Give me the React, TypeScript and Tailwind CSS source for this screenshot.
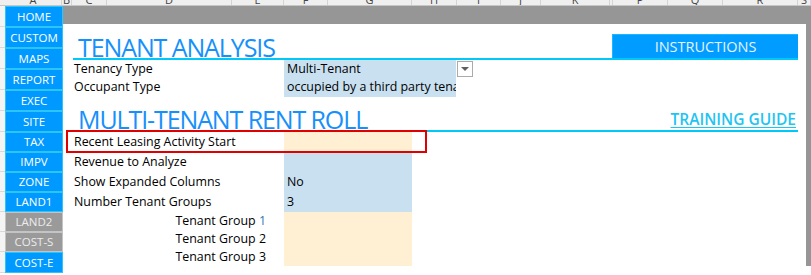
import React from 'react';

const font = { fontFamily: '"Open Sans", "Noto Sans", "DejaVu Sans", sans-serif' };

// spreadsheet column headers (only the bottom of the letters is visible)
const columns: { letter: string; w: number }[] = [
  { letter: 'A', w: 57 },
  { letter: 'B', w: 10 },
  { letter: 'C', w: 35 },
  { letter: 'D', w: 125 },
  { letter: 'E', w: 52 },
  { letter: 'F', w: 44 },
  { letter: 'G', w: 84 },
  { letter: 'H', w: 45 },
  { letter: 'I', w: 44 },
  { letter: 'J', w: 40 },
  { letter: 'K', w: 69 },
  { letter: '', w: 3 },
  { letter: 'P', w: 55 },
  { letter: 'Q', w: 55 },
  { letter: 'R', w: 75 },
  { letter: 'S', w: 13 },
];

const navItems: { label: string; gray?: boolean; h: string }[] = [
  { label: 'HOME', h: 'h-[21px]' },
  { label: 'CUSTOM', h: 'h-[21px]' },
  { label: 'MAPS', h: 'h-[21px]' },
  { label: 'REPORT', h: 'h-[21px]' },
  { label: 'EXEC', h: 'h-[21px]' },
  { label: 'SITE', h: 'h-[21px]' },
  { label: 'TAX', h: 'h-[20px]' },
  { label: 'IMPV', h: 'h-[20px]' },
  { label: 'ZONE', h: 'h-[20px]' },
  { label: 'LAND1', h: 'h-[20px]' },
  { label: 'LAND2', gray: true, h: 'h-[20px]' },
  { label: 'COST-S', gray: true, h: 'h-[20px]' },
  { label: 'COST-E', h: 'h-[21px]' },
];

const ColumnHeader = () => (
  <div className="flex h-[6px] overflow-hidden bg-[#efefef] border-b border-[#c6c6c6]">
    <div className="w-[5px] shrink-0" />
    {columns.map((c, i) => (
      <div
        key={i}
        className="shrink-0 border-r border-[#d4d4d4] flex justify-center overflow-hidden"
        style={{ width: c.w }}
      >
        <span className="text-[11px] leading-none text-[#444] -mt-[6px]">{c.letter}</span>
      </div>
    ))}
  </div>
);

const NavColumn = () => (
  <div className="flex shrink-0">
    <div className="w-[5px] bg-[#f4f4f4] flex flex-col">
      {navItems.map((n) => (
        <div key={n.label} className={`${n.h} border-b border-[#d9d9d9]`} />
      ))}
    </div>
    <div className="w-[58px] flex flex-col">
      {navItems.map((n) => (
        <div
          key={n.label}
          className={`${n.h} flex items-center justify-center text-[11.5px] border ${
            n.gray
              ? 'bg-[#9a9a9a] border-[#c4c4c4] text-[#ececec]'
              : 'bg-[#0099ff] border-[#2bc6f7] text-white'
          }`}
        >
          {n.label}
        </div>
      ))}
    </div>
  </div>
);

const Row = ({
  label,
  value,
  cell,
  h = 'h-[20px]',
  right,
  children,
}: {
  label: React.ReactNode;
  value?: string;
  cell?: string;
  h?: string;
  right?: boolean;
  children?: React.ReactNode;
}) => (
  <div className={`flex items-stretch ${h}`}>
    <div
      className={`w-[211px] shrink-0 flex items-center text-[12.4px] text-black whitespace-nowrap ${
        right ? 'justify-end pr-[18px]' : 'pl-[1px]'
      }`}
    >
      {label}
    </div>
    <div className={`${cell ?? ''} flex items-center pl-[3px] text-[12.4px] text-black whitespace-nowrap overflow-hidden`}>
      {value}
    </div>
    {children}
  </div>
);

const Title = ({ children }: { children: React.ReactNode }) => (
  <div className="pl-[5px] text-[25px] leading-[22px] text-[#1690fb] font-[370] tracking-[-1.1px]">
    {children}
  </div>
);

export default function App() {
  return (
    <div className="w-[811px] h-[275px] overflow-hidden bg-white" style={font}>
      <ColumnHeader />
      <div className="flex">
        <NavColumn />
        <div className="flex-1 flex flex-col">
          <div className="h-[18px] bg-[#969696]" />
          <div className="flex">
            <div className="w-[743px] bg-white pl-[10px] pr-[8px] relative">
              {/* Tenant analysis */}
              <div className="h-[36px] flex items-end justify-between border-b-2 border-[#00c8f8]">
                <Title>TENANT ANALYSIS</Title>
                <div className="w-[186px] h-[24px] bg-[#009cff] border-t border-l border-[#17b8ff] flex items-center justify-center text-[14.5px] text-[#e6f3ff]">
                  INSTRUCTIONS
                </div>
              </div>
              <div className="flex">
                <div className="flex flex-col">
                  <Row label="Tenancy Type" value="Multi-Tenant" cell="w-[172px] bg-[#c9e0f0]" h="h-[18px]">
                    <div className="ml-[1px] mt-[1px] w-[16px] h-[16px] bg-white border border-[#ababab] flex items-center justify-center">
                      <svg width="8" height="4" viewBox="0 0 8 4">
                        <path d="M0 0 L8 0 L4 4 Z" fill="#606060" />
                      </svg>
                    </div>
                  </Row>
                  <Row
                    label="Occupant Type"
                    value="occupied by a third party tenant"
                    cell="w-[172px] bg-[#c9e0f0]"
                    h="h-[19px]"
                  />
                </div>
              </div>

              {/* Multi-tenant rent roll */}
              <div className="h-[35px] flex items-end justify-between border-b-2 border-[#00c8f8]">
                <Title>MULTI-TENANT RENT ROLL</Title>
                <div className="text-[15.5px] leading-[18px] font-semibold text-[#1ec4f2] underline underline-offset-[2px] pb-[2px] mr-[2px]">
                  TRAINING GUIDE
                </div>
              </div>
              <div className="flex flex-col">
                <Row label="Recent Leasing Activity Start" cell="w-[128px] bg-[#fff0d4]" />
                <Row label="Revenue to Analyze" cell="w-[128px] bg-[#c9e0f0]" />
                <Row label="Show Expanded Columns" value="No" cell="w-[128px] bg-[#c9e0f0]" />
                <Row label="Number Tenant Groups" value="3" cell="w-[128px] bg-[#c9e0f0]" />
                <Row
                  label={
                    <>
                      Tenant Group&nbsp;<span className="text-[#2e75b6]">1</span>
                    </>
                  }
                  right
                  cell="w-[128px] bg-[#fff0d4]"
                  h="h-[18px]"
                />
                <Row label="Tenant Group 2" right cell="w-[128px] bg-[#fff0d4]" h="h-[18px]" />
                <Row label="Tenant Group 3" right cell="w-[128px] bg-[#fff0d4]" h="h-[18px]" />
              </div>

              {/* highlight box */}
              <div className="absolute left-[3px] top-[106px] w-[361px] h-[23px] border-2 border-[#e00000] pointer-events-none" />
            </div>
            <div className="flex-1 bg-[#969696]" />
          </div>
        </div>
      </div>
    </div>
  );
}
